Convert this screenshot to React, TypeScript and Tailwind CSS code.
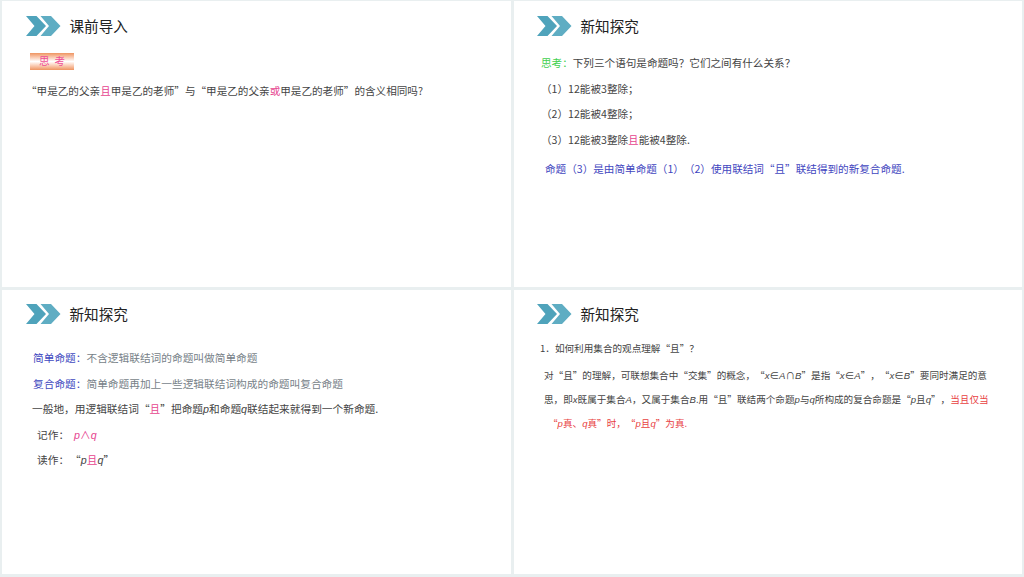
const cjk = "font-['Noto_Sans_CJK_SC',sans-serif]";

function Arrows() {
  return (
    <svg width="35" height="20" viewBox="0 0 35 20" className="shrink-0">
      <path d="M0 0H10.5L20 10L10.5 20H0L8.5 10Z" fill="#4fa3bb" />
      <path d="M14.5 0H25L34.5 10L25 20H14.5L23 10Z" fill="#5fadc3" />
    </svg>
  );
}

function Header({ title }: { title: string }) {
  return (
    <div className="flex items-center gap-[8.5px] h-[20px]">
      <Arrows />
      <h2 className="text-[14.6px] leading-[20px] text-[#222] font-normal">{title}</h2>
    </div>
  );
}

function Pink({ children }: { children: React.ReactNode }) {
  return <span className="text-[#e6458f]">{children}</span>;
}

function V({ children }: { children: React.ReactNode }) {
  return <i className="font-['Liberation_Sans',sans-serif]">{children}</i>;
}

export default function App() {
  return (
    <div className={`w-[1024px] h-[577px] bg-[#e9eff0] overflow-hidden pt-[1px] pl-[2px] grid grid-cols-[509px_508px] grid-rows-[286px_284px] gap-x-[3px] gap-y-[3px] [text-spacing-trim:space-all] ${cjk}`}>
      {/* top left */}
      <section className="bg-white pl-[24px] pt-[15px]">
        <Header title="课前导入" />
        <div className="ml-[4px] mt-[17px] w-[44px] h-[17px] bg-gradient-to-b from-[#ee9460] via-white to-[#ee9460] flex items-center justify-center text-[10.5px] leading-none tracking-[5px] pl-[5px] text-[#ee4d96]">
          思考
        </div>
        <p className="mt-[13px] text-[10.6px] leading-[16px] text-[#444]">
          “甲是乙的父亲<Pink>且</Pink>甲是乙的老师”与“甲是乙的父亲<Pink>或</Pink>甲是乙的老师”的含义相同吗?
        </p>
      </section>

      {/* top right */}
      <section className="bg-white pl-[23px] pt-[15px]">
        <Header title="新知探究" />
        <div className="ml-[4px] mt-[19px] text-[10.6px] leading-[16px] text-[#444]">
          <p><span className="text-[#3fd04f]">思考：</span>下列三个语句是命题吗？它们之间有什么关系？</p>
          <div className="mt-[9.5px] flex flex-col gap-[9.7px]">
            <p>（1）12能被3整除；</p>
            <p>（2）12能被4整除；</p>
            <p>（3）12能被3整除<Pink>且</Pink>能被4整除.</p>
          </div>
          <p className="ml-[4px] mt-[13px] text-[#3f46c0]">命题（3）是由简单命题（1）（2）使用联结词“且”联结得到的新复合命题.</p>
        </div>
      </section>

      {/* bottom left */}
      <section className="bg-white pl-[24px] pt-[14px]">
        <Header title="新知探究" />
        <div className="ml-[7px] mt-[26px] text-[10.7px] leading-[16px] text-[#444] flex flex-col gap-[9.5px]">
          <p className="text-[#777f88]"><span className="text-[#4048c0]">简单命题：</span>不含逻辑联结词的命题叫做简单命题</p>
          <p className="text-[#777f88]"><span className="text-[#4048c0]">复合命题：</span>简单命题再加上一些逻辑联结词构成的命题叫复合命题</p>
          <p className="-ml-[1px]">一般地，用逻辑联结词“<Pink>且</Pink>”把命题<V>p</V>和命题<V>q</V>联结起来就得到一个新命题.</p>
          <p className="ml-[4px]">记作：<span className="ml-[5px] text-[#e6458f]"><V>p</V>∧<V>q</V></span></p>
          <p className="ml-[4px]">读作：<span className="ml-[1px]">“<V>p</V><Pink>且</Pink><V>q</V>”</span></p>
        </div>
      </section>

      {/* bottom right */}
      <section className="bg-white pl-[23px] pt-[14px]">
        <Header title="新知探究" />
        <div className="ml-[3px] mt-[17px] text-[9.6px] leading-[14px] text-[#444]">
          <p>1．如何利用集合的观点理解“且”？</p>
          <div className="ml-[4px] mt-[13px] w-[460px] flex flex-col gap-[9px]">
            <p>对“且”的理解，可联想集合中“交集”的概念，“<V>x</V>∈<V>A</V>∩<V>B</V>”是指“<V>x</V>∈<V>A</V>”，“<V>x</V>∈<V>B</V>”要同时满足的意</p>
            <p>思，即<V>x</V>既属于集合<V>A</V>，又属于集合<V>B</V>.用“且”联结两个命题<V>p</V>与<V>q</V>所构成的复合命题是“<V>p</V>且<V>q</V>”，<span className="text-[#e8413f]">当且仅当</span></p>
            <p className="ml-[4px] text-[#e8413f]">“<V>p</V>真、<V>q</V>真”时，“<V>p</V>且<V>q</V>”为真.</p>
          </div>
        </div>
      </section>
    </div>
  );
}
